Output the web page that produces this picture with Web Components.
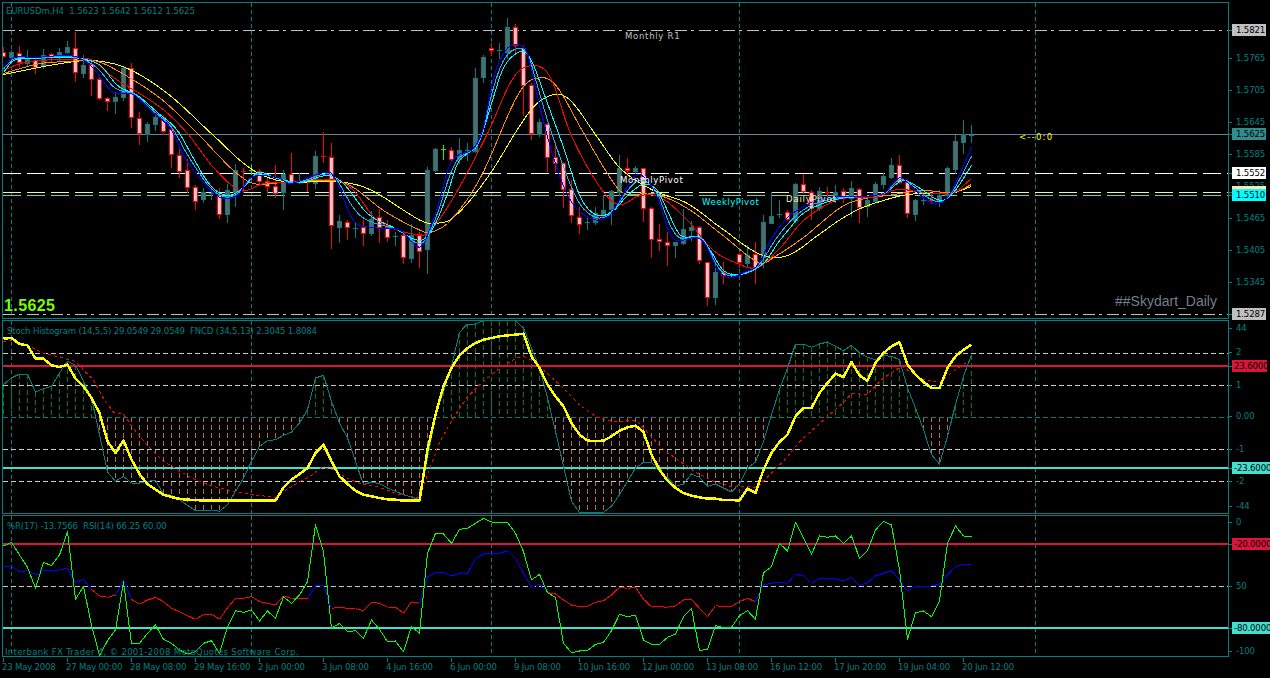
<!DOCTYPE html>
<html><head><meta charset="utf-8"><title>EURUSDm,H4</title>
<style>html,body{margin:0;background:#000;height:678px;overflow:hidden}</style></head>
<body>
<fx-terminal>
  <chart-pane id="p1" h="317"></chart-pane>
  <chart-pane id="p2" h="194"></chart-pane>
  <chart-pane id="p3" h="142"></chart-pane>
  <time-axis></time-axis>
</fx-terminal>
<script>
const NS='http://www.w3.org/2000/svg';
const FONT='"DejaVu Sans Condensed","DejaVu Sans",sans-serif';
const TEAL='#008080';
class FxTerminal extends HTMLElement{constructor(){super();this.attachShadow({mode:'open'}).innerHTML=`<style>:host{display:grid;grid-template-columns:1fr;row-gap:1px;padding-top:2px;width:1270px;height:676px;background:#000;color:${TEAL};font:condensed 9.5px ${FONT}}</style><slot></slot>`}}
class ChartPane extends HTMLElement{
  constructor(){super();const s=this.attachShadow({mode:'open'});const h=+this.getAttribute('h')||100;
    s.innerHTML=`<style>:host{display:grid;grid-template-columns:1227px 1fr;margin-left:2px;height:${h}px}
    .plot{position:relative;box-sizing:border-box;border:1px solid ${TEAL};overflow:hidden;height:${h}px}
    svg{display:block;position:absolute;left:0;top:0}
    .axis{position:relative}
    </style><div class="plot"><slot></slot><svg shape-rendering="crispEdges"></svg><slot name="note"></slot></div><div class="axis"><slot name="tag"></slot></div>`;
    this.svg=s.querySelector('svg');
    this.top=0;}
  frame(top,h){this.top=top;this.svg.setAttribute('width',1225);this.svg.setAttribute('height',h-2);this.svg.setAttribute('viewBox',`3 ${top+1} 1225 ${h-2}`);}
  el(n,a){const e=document.createElementNS(NS,n);for(const k in a)e.setAttribute(k,a[k]);this.svg.appendChild(e);return e}
  hline(y,c,w=1,dash){const a={x1:3,x2:1228,y1:y+(w%2?.5:0),y2:y+(w%2?.5:0),stroke:c,'stroke-width':w};if(dash)a['stroke-dasharray']=dash;this.el('line',a)}
  vline(x,y1,y2,c,dash){const a={x1:x+.5,x2:x+.5,y1,y2,stroke:c};if(dash)a['stroke-dasharray']=dash;this.el('line',a)}
  poly(pts,c,w=1,dash){const a={points:pts.map(p=>p.join(',')).join(' '),fill:'none',stroke:c,'stroke-width':w,'stroke-linejoin':'round'};if(dash)a['stroke-dasharray']=dash;this.el('polyline',a)}
  rect(x,y,w,h,f){this.el('rect',{x,y,width:w,height:h,fill:f})}
}
class ChartNote extends HTMLElement{constructor(){super();const a=this.attachShadow({mode:'open'});a.innerHTML=`<style>:host{position:absolute;white-space:pre;left:var(--x);top:var(--y);line-height:12px;color:var(--c,${TEAL});font:var(--f,inherit);letter-spacing:var(--ls,0)}</style><slot></slot>`}}
class PriceTag extends HTMLElement{constructor(){super();const a=this.attachShadow({mode:'open'});a.innerHTML=`<style>:host{position:absolute;left:3px;top:var(--y);height:var(--h,12px);line-height:12px;box-sizing:border-box;padding:0 0 0 var(--pl,4px);white-space:pre;width:var(--w,34px);color:var(--c,${TEAL});background:var(--b,transparent);overflow:var(--o,visible);letter-spacing:-.15px}
    :host::before{content:"";position:absolute;left:-3px;top:6px;width:3px;height:1px;background:${TEAL}}</style><slot></slot>`}}
class TimeAxis extends HTMLElement{constructor(){super();const a=this.attachShadow({mode:'open'});a.innerHTML=`<style>:host{display:flex;height:20px;width:1226px;margin-left:2px;padding-left:0}
    .t{flex:0 0 64px;box-sizing:border-box;position:relative;padding:3px 0 0 0;white-space:pre;line-height:12px;letter-spacing:-.2px}
    .t::before{content:"";position:absolute;left:1px;top:0;width:1px;height:4px;background:${TEAL}}</style><span id="r" style="display:contents"></span>`;
    const L=['23 May 2008','27 May 00:00','28 May 08:00','29 May 16:00','2 Jun 00:00','3 Jun 08:00','4 Jun 16:00','6 Jun 00:00','9 Jun 08:00','10 Jun 16:00','12 Jun 00:00','13 Jun 08:00','16 Jun 12:00','17 Jun 20:00','19 Jun 04:00','20 Jun 12:00'];
    a.getElementById('r').innerHTML=L.map(t=>`<div class="t">${t}</div>`).join('')}}
customElements.define('fx-terminal',FxTerminal);customElements.define('chart-pane',ChartPane);customElements.define('chart-note',ChartNote);customElements.define('price-tag',PriceTag);customElements.define('time-axis',TimeAxis);

const bx=i=>3+8*i;
function curve(k){const f=x=>{let i=0;while(i<k.length-2&&k[i+1][0]<x)i++;const a=k[i],b=k[i+1],p=k[Math.max(0,i-1)],q=k[Math.min(k.length-1,i+2)];const h=b[0]-a[0],t=(x-a[0])/h;const m0=(b[1]-p[1])/(b[0]-p[0])*h,m1=(q[1]-a[1])/(q[0]-a[0])*h;const t2=t*t,t3=t2*t;return (2*t3-3*t2+1)*a[1]+(t3-2*t2+t)*m0+(-2*t3+3*t2)*b[1]+(t3-t2)*m1};return f}
function sample(f){const r=[];for(let x=3;x<=971;x+=4)r.push([x+.5,+f(x).toFixed(1)+.5]);return r}

const CS=`p 52 56 47 57|g 52 57 50 63|p 53 62 46 66|g 59 63 50 65|p 60 67 57 73|g 55 66 49 68|p 54 57 53 62|g 52 57 48 60|g 47 52 41 53|p 48 72 32 81|g 65 73 55 77|p 64 79 59 95|p 79 98 76 99|p 98 101 97 110|g 97 101 92 113|g 68 97 67 100|p 68 117 63 127|p 118 133 112 144|g 124 134 122 141|g 117 124 115 130|p 117 131 115 134|p 129 154 128 167|p 155 171 149 177|p 170 187 159 192|p 187 201 185 209|g 192 199 188 202|t 193 193 187 199|p 195 214 188 218|g 190 214 184 222|g 170 192 164 206|r 171 171 168 192|l 170 170 165 174|p 171 181 169 185|p 181 186 177 193|p 186 193 165 197|g 174 192 170 209|p 174 182 153 183|t 181 181 173 183|r 182 182 179 191|g 156 183 151 188|r 156 156 132 162|p 157 225 143 248|g 221 227 215 242|p 222 227 220 239|t 228 228 223 237|p 227 233 220 245|g 219 233 211 235|p 217 227 209 242|p 227 237 220 241|t 236 236 232 245|p 235 257 233 263|g 235 258 224 262|p 234 251 232 267|g 170 249 167 273|g 149 170 148 171|l 149 149 145 159|p 150 159 147 160|g 150 159 138 163|t 150 150 143 160|g 78 151 68 152|g 57 77 55 82|p 48 50 43 55|t 50 50 43 58|g 27 52 18 58|p 27 45 24 53|p 48 85 45 115|p 85 133 83 139|g 122 134 119 136|p 124 157 123 171|p 157 163 142 171|p 163 189 162 207|p 189 215 180 222|p 217 224 207 233|t 222 222 217 229|g 213 222 207 224|g 210 215 195 217|g 191 209 190 224|g 168 192 155 195|p 168 170 158 175|g 168 171 166 173|p 168 208 168 221|p 208 239 207 257|p 239 241 224 250|p 242 245 232 265|g 242 245 242 257|g 229 243 209 244|g 227 230 221 240|p 227 260 226 263|p 262 297 262 305|g 272 297 262 304|p 272 275 262 283|l 275 275 273 277|p 254 262 253 267|g 255 263 245 267|p 254 267 242 283|g 222 257 215 267|g 216 223 192 223|t 214 214 200 217|p 212 219 210 220|g 184 220 183 222|p 184 191 174 193|p 192 208 190 219|g 191 208 187 210|r 192 192 187 197|g 192 196 185 202|p 191 198 188 202|g 188 198 181 216|p 189 207 188 222|g 200 206 198 216|g 184 201 182 202|g 176 184 173 188|g 165 177 158 178|p 165 182 155 183|p 182 213 180 217|g 200 214 199 220|t 200 200 193 204|r 200 200 193 203|g 195 201 190 206|g 168 195 167 197|g 141 169 135 173|g 134 142 120 153|t 135 135 125 142`.split('|').map(s=>{const[a,...n]=s.split(' ');return[a,...n.map(Number)]});

const MA={
yellow:[[3,74],[33,68],[67,62],[93,60],[127,68],[167,93],[213,135],[250,168],[283,181],[333,181],[367,188],[420,220],[433,223],[453,217],[487,177],[530,110],[553,94],[570,100],[597,137],[620,168],[653,190],[687,203],[720,227],[760,254],[787,255],[820,233],[840,219],[860,208],[883,200],[907,194],[933,193],[953,192],[971,186]],
orange:[[3,73],[20,68],[40,63],[67,61],[93,60],[113,68],[160,98],[197,133],[233,170],[253,183],[283,182],[333,180],[353,187],[383,210],[420,230],[430,232],[450,220],[480,177],[520,90],[542,77],[557,87],[580,127],[607,173],[623,193],[653,193],[687,208],[720,233],[760,263],[773,257],[803,237],[840,207],[860,199],[887,195],[923,190],[953,192],[971,184]],
red:[[3,70],[20,63],[40,60],[67,59],[90,59],[113,77],[160,107],[187,133],[213,167],[240,190],[263,183],[283,182],[333,179],[353,190],[377,220],[420,235],[430,230],[453,197],[487,133],[513,77],[533,65],[550,77],[570,133],[597,183],[617,204],[640,195],[660,197],[687,220],[713,250],[737,263],[757,267],[780,247],[803,220],[840,198],[873,197],[897,189],[923,192],[953,192],[971,178]],
cyan:[[3,72],[13,60],[33,58],[60,57],[80,58],[100,65],[117,85],[137,95],[157,112],[177,130],[193,158],[210,185],[227,195],[243,187],[257,172],[277,178],[300,182],[327,175],[343,183],[367,213],[393,227],[420,240],[433,227],[447,193],[457,163],[467,153],[478,143],[492,100],[503,67],[520,51],[530,58],[547,103],[563,147],[580,197],[597,215],[613,210],[627,195],[643,184],[657,190],[670,217],[680,235],[700,237],[710,250],[723,270],[740,274],[763,263],[777,243],[790,227],[800,215],[817,205],[840,198],[883,193],[902,180],[915,185],[940,200],[953,192],[971,165]],
blue:[[3,65],[13,57],[33,57],[67,55],[80,58],[93,68],[110,90],[117,93],[133,94],[150,110],[170,128],[183,155],[203,182],[220,197],[237,195],[250,177],[277,177],[290,183],[320,173],[333,175],[353,220],[373,227],[400,230],[420,247],[430,227],[440,197],[448,167],[457,155],[473,148],[483,127],[493,77],[505,50],[516,44],[527,53],[537,97],[553,157],[570,200],[590,218],[607,217],[617,203],[633,177],[643,176],[657,197],[667,227],[675,240],[697,237],[707,247],[717,270],[730,277],[743,272],[757,265],[770,240],[787,217],[800,208],[815,200],[840,196],[883,193],[899,177],[910,185],[930,202],[947,197],[971,147]]};

const ST=[200,180,168,168,222,212,205,165,130,142,190,240,350,462,490,475,495,495,490,487,528,532,545,562,578,578,576,580,560,520,480,430,385,368,365,352,342,315,275,180,172,250,315,360,430,500,492,497,510,520,530,537,545,420,295,220,145,43,18,18,8,8,8,8,8,30,90,150,240,340,445,550,583,585,583,583,565,530,490,450,433,433,460,480,505,498,468,478,505,498,510,522,497,450,432,370,290,215,150,78,78,88,78,72,85,98,82,105,118,125,113,115,125,210,270,335,410,438,355,260,175,110];
const YL=[62,60,78,82,122,122,142,147,140,182,205,240,285,370,405,367,425,468,498,515,530,537,543,545,546,548,548,548,548,548,548,548,548,548,548,508,485,468,450,405,380,430,475,498,518,530,535,540,544,545,548,548,548,395,290,205,150,112,90,75,65,60,55,52,50,47,115,150,200,235,265,315,350,368,369,368,355,338,328,323,342,410,455,488,510,525,533,538,542,542,546,546,548,512,525,455,405,372,350,295,270,270,225,195,167,177,132,172,188,135,105,85,73,140,170,192,210,210,150,115,95,80];
const RD=[[10,70],[34,68],[60,80],[90,85],[130,105],[180,118],[226,130],[250,155],[280,185],[310,240],[340,282],[370,288],[400,330],[440,380],[490,430],[540,460],[590,488],[640,505],[700,520],[760,530],[826,538],[860,515],[900,490],[930,475],[965,448],[1000,455],[1040,480],[1090,500],[1130,505],[1200,530],[1258,540]].concat(
[[0,530],[30,450],[60,370],[100,300],[140,240],[190,190],[240,150],[290,120],[310,115],[340,130],[380,165],[430,210],[480,262],[530,298],[580,310],[650,308],[680,340],[730,395],[780,430],[830,465],[880,490],[930,505],[980,505],[1010,510],[1050,470],[1090,430],[1140,370],[1190,325],[1260,262]].map(p=>[p[0]+1260,p[1]]),
[[10,255],[35,226],[80,230],[130,180],[185,145],[250,185],[300,192],[340,160],[385,130]].map(p=>[p[0]+2520,p[1]]));
const WR=[108,97,135,172,235,157,167,135,65,268,230,345,437,392,360,215,402,400,370,345,388,400,420,432,425,400,392,430,350,302,307,300,333,303,325,260,280,255,215,45,125,355,340,365,362,385,330,358,395,393,425,350,370,130,70,72,100,58,55,40,25,36,37,37,70,125,210,193,248,262,400,428,423,422,403,397,362,313,320,316,390,403,403,382,372,320,295,422,418,347,353,352,317,302,328,188,170,100,123,37,83,133,78,82,78,100,78,145,122,60,34,45,180,388,308,303,320,272,100,48,78,78];
const RS=[170,170,185,182,195,180,183,180,175,218,208,238,258,262,255,212,268,283,270,262,275,295,305,317,328,314,312,328,293,265,265,260,275,280,285,258,265,265,265,228,227,295,292,295,296,302,277,280,292,292,310,275,280,200,187,187,198,190,190,145,132,130,130,122,145,190,232,222,248,252,270,285,290,289,277,272,255,232,235,232,268,290,290,292,288,270,268,295,320,287,290,289,275,265,275,225,220,217,220,193,197,220,205,205,207,213,202,227,218,198,190,182,210,243,230,229,228,222,195,170,163,163];

const [p1,p2,p3]=[1,2,3].map(n=>document.getElementById('p'+n));
p1.frame(2,317);p2.frame(320,194);p3.frame(515,142);
const seps=[11,251,491,739,1035];
const DDT='12 4 3 5';
seps.forEach(x=>p1.vline(x,3,318,'#008080','4 3'));
p1.hline(30,'#c0c0c0',1,DDT);p1.hline(314,'#c0c0c0',1,DDT);
p1.hline(134,'#708090');
p1.hline(173,'#ffffff',1,'18 6');p1.hline(192,'#ffe4b5',1,'18 6');p1.hline(195,'#40e0d0',1,'18 6');
CS.forEach((c,i)=>{const x=bx(i),[k,t,b,h,l]=c;
 const wick={p:'#ff0000',r:'#ff0000',g:'#008080',t:'#008080',l:'#00ff00'}[k];
 p1.rect(x,h,1,l-h+1,wick);
 if(k==='p'||k==='g'){p1.rect(x-2,t,5,b-t+1,wick);if(b-t>=2)p1.rect(x-1,t+1,3,b-t-1,k==='p'?'#ffc0cb':'#556b6b')}
 else p1.rect(x-2,t,5,1,wick);
});
const cols={yellow:'#ffff00',orange:'#ff8c00',red:'#ff0000'};
for(const n in cols)p1.poly(sample(curve(MA[n])),cols[n]);
const fb=curve(MA.blue),fc=curve(MA.cyan);
p1.poly(sample(fc),'#00ffff');
p1.poly(sample(x=>(fb(x)+fc(x))/2),'#00bfff');
p1.poly(sample(fb),'#0000ff');
const Y2=v=>318+v/3,Y3=v=>510+v/3;
const grey='#c8c8c8';
seps.forEach(x=>p2.vline(x,321,513,'#008080','4 3'));
ST.forEach((v,i)=>{const y=Y2(v);const up=y<417;p2.vline(bx(i),up?Math.round(y):417,up?417:Math.round(y),up?'#008000':'#cd5c5c','5 3')});
[353,385,449,481].forEach(y=>p2.hline(y,grey,1,'5 3'));
p2.hline(417,'#008080',1,'5 3');
p2.hline(366,'#dc143c',2);p2.hline(468,'#40e0d0',2);
p2.poly(ST.map((v,i)=>[bx(i)+.5,Y2(v)]),'#008080');
p2.poly(RD.map(p=>[p[0]/3,Y2(p[1])]),'#ff0000',1,'3 3');
p2.poly(YL.map((v,i)=>[bx(i)+.5,Y2(v)]),'#ffff00',2.5);
seps.forEach(x=>p3.vline(x,516,656,'#008080','4 3'));
p3.hline(586,grey,1,'5 3');
p3.hline(544,'#dc143c',2);p3.hline(628,'#40e0d0',2);
for(let i=0;i<RS.length-1;i++){const a=RS[i],b=RS[i+1];p3.poly([[bx(i)+.5,Y3(a)],[bx(i+1)+.5,Y3(b)]],Math.min(a,b)<=230?'#0000ff':'#ff0000')}
p3.poly(WR.map((v,i)=>[bx(i)+.5,Y3(v)]),'#00ff00');

function note(p,top,x,y,t,c,f,ls){const n=document.createElement('chart-note');n.slot='note';n.textContent=t;n.style.setProperty('--x',(x-3)+'px');n.style.setProperty('--y',(y-top-1)+'px');if(c)n.style.setProperty('--c',c);if(f)n.style.setProperty('--f',f);if(ls)n.style.setProperty('--ls',ls+'px');p.appendChild(n)}
function tag(p,top,y,t,c,b,w,h){const n=document.createElement('price-tag');n.slot='tag';n.textContent=t;n.style.setProperty('--y',(y-top-6)+'px');if(c)n.style.setProperty('--c',c);if(b)n.style.setProperty('--b',b);if(w){n.style.setProperty('--w',w+'px');n.style.setProperty('--pl','2px')}if(h){n.style.setProperty('--h',h+'px');n.style.setProperty('--o','hidden')}p.appendChild(n)}
note(p1,2,6,5,'EURUSDm,H4  1.5623 1.5642 1.5612 1.5625',null,null,-.08);
note(p1,2,625,30,'Monthly R1','#c0c0c0',null,.7);
note(p1,2,625,316,'Monthly S1','#c0c0c0',null,.7);
note(p1,2,620,174,'MonthlyPivot','#ffffff',null,.7);
note(p1,2,702,196,'WeeklyPivot','#00ffff',null,.5);
note(p1,2,786,193,'DailyPivot','#ffe4b5',null,.8);
note(p1,2,1019,131,'<--0:0','#ffff00',null,1.2);
note(p1,2,4,297,'1.5625','#7cfc00','bold 16px "Liberation Sans",sans-serif',.4);
note(p1,2,1115,293,'##Skydart_Daily','#708090','14px "Liberation Sans",sans-serif');
note(p2,320,7,325,'Stoch Histogram (14,5,5) 29.0549 29.0549  FNCD (34,5,13) 2.3045 1.8084',null,null,-.15);
note(p3,515,7,520,'%R(17) -13.7566  RSI(14) 66.25 60.00',null,null,-.12);
note(p3,515,5,646,'Interbank FX Trader 4, © 2001-2008 MetaQuotes Software Corp.',null,null,.3);

tag(p1,2,30,'1.5821','#000','#c0c0c0');
[[58,'1.5765'],[90,'1.5705'],[122,'1.5645'],[154,'1.5585'],[218,'1.5465'],[250,'1.5405'],[282,'1.5345']].forEach(a=>tag(p1,2,a[0],a[1]));
tag(p1,2,186,'1.5525',null,null,null,6);
tag(p1,2,134,'1.5625','#000','#2f8f8f');
tag(p1,2,173,'1.5552','#000','#fff');
tag(p1,2,192,'','#000','#ffe4b5');
tag(p1,2,195,'1.5510','#000','#00ffff');
tag(p1,2,314,'1.5287','#000','#c0c0c0');
[[328,'44'],[352,'2'],[385,'1'],[416,'0.00'],[449,'-1'],[481,'-2'],[506,'-44']].forEach(a=>tag(p2,320,a[0],a[1]));
tag(p2,320,366,'23.6000','#000','#dc143c',35);
tag(p2,320,468,'-23.6000','#000','#40e0d0',39);
[[522,'0'],[586,'50'],[651,'-100']].forEach(a=>tag(p3,515,a[0],a[1]));
tag(p3,515,544,'-20.0000','#000','#dc143c',39);
tag(p3,515,628,'-80.0000','#000','#40e0d0',39);
</script>
</body></html>
